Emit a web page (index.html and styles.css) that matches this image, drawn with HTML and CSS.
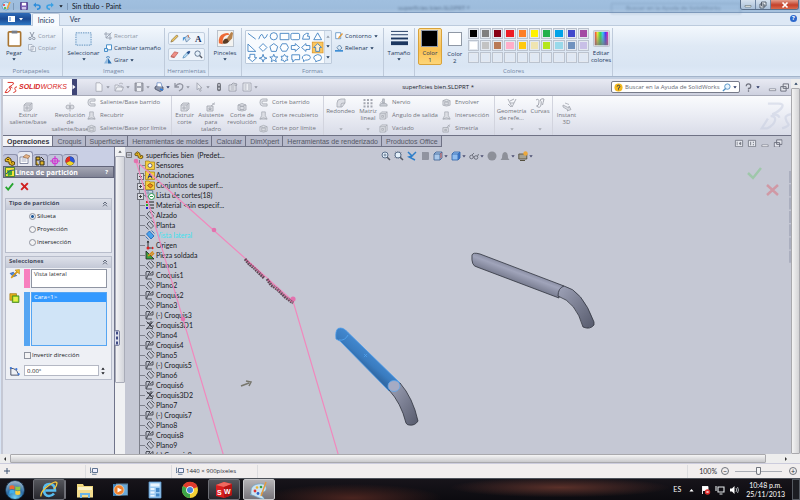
FILE: index.html
```html
<!DOCTYPE html>
<html lang="es">
<head>
<meta charset="utf-8">
<title>Sin título - Paint</title>
<link rel="stylesheet" href="styles.css">
</head>
<body>
<svg class="defs" aria-hidden="true">
  <defs>
    <linearGradient id="g-tube" x1="0" y1="0" x2="1" y2="1"><stop offset="0" stop-color="#9fa3b8"/><stop offset="1" stop-color="#565a6c"/></linearGradient>
    <linearGradient id="g-bar" gradientUnits="userSpaceOnUse" x1="522" y1="268" x2="516" y2="284"><stop offset="0" stop-color="#82869b"/><stop offset=".35" stop-color="#a0a4ba"/><stop offset="1" stop-color="#707487"/></linearGradient>
    <linearGradient id="g-blue" gradientUnits="userSpaceOnUse" x1="372" y1="353" x2="362" y2="365"><stop offset="0" stop-color="#4288cf"/><stop offset=".6" stop-color="#3a7cc0"/><stop offset="1" stop-color="#3069a5"/></linearGradient>
    <linearGradient id="g-rain" x1="0" x2="1" y1="0" y2="0"><stop offset="0" stop-color="#f33"/><stop offset=".2" stop-color="#ee3"/><stop offset=".4" stop-color="#3d4"/><stop offset=".6" stop-color="#3cf"/><stop offset=".8" stop-color="#43f"/><stop offset="1" stop-color="#f2a"/></linearGradient>
    <linearGradient id="g-dark" x1="0" x2="0" y1="0" y2="1"><stop offset="0" stop-color="#888" stop-opacity="0"/><stop offset="1" stop-color="#777" stop-opacity=".8"/></linearGradient>
    <radialGradient id="g-orb" cx=".5" cy=".9" r=".9"><stop offset="0" stop-color="#6fd0f5"/><stop offset=".5" stop-color="#2a6da8"/><stop offset="1" stop-color="#a9bccb"/></radialGradient>
  </defs>
  <symbol id="i-caret" viewBox="0 0 4 3"><path d="M.3.3h3.4L2 2.4z" fill="currentColor"/></symbol>
  <symbol id="i-plane" viewBox="0 0 10 10"><g fill="none" stroke="#3c3f48" stroke-width=".8"><path d="M2 4 4.500 1.500 8.500 6 6 8.500zM.5 6.500l3 3M6.500.500l3 3"/></g></symbol>
  <symbol id="i-planeb" viewBox="0 0 10 10"><path d="M1.500 4 4.500 1l4.500 5L6 9z" fill="#49a3ee" stroke="#1c5fae" stroke-width=".8"/><path d="M.5 6.500l3 3M6.500.500l3 3" stroke="#1c5fae" stroke-width=".8"/></symbol>
  <symbol id="i-sk" viewBox="0 0 10 10"><path d="M1 1.500h4L3 5h5V1.500L5 4M1 2v7h6M3 5 1.500 8.500" fill="none" stroke="#3c3f48" stroke-width=".9"/></symbol>
  <symbol id="i-sk3" viewBox="0 0 10 10"><path d="M1.500 1.500 8 8M8 1.500 2 8.500M2 3h3v3h4M1 9l3-1 4 1M6 1v3" fill="none" stroke="#33363e" stroke-width=".9"/></symbol>
  <symbol id="i-folder" viewBox="0 0 10 10"><path d="M.5 1h3.500l1 1h4.500v7.500h-9z" fill="#f5cf3f" stroke="#a87c10" stroke-width=".7"/></symbol>
  <symbol id="i-part" viewBox="0 0 12 10"><path d="M1 3.500 4 1l3 2v2l3.500 1v2.500L8 9.500 5 8V6L1.500 5.500z" fill="#e9b820" stroke="#4c3a08" stroke-width=".9"/><path d="M3 3.500h2M7 6.500l1.500.7" stroke="#4c3a08" stroke-width=".9"/></symbol>
  <symbol id="i-cube" viewBox="0 0 10 10"><path d="M1 3h6v6H1zM1 3l2-2h6v6L7 9M7 3l2-2M3 5h2v2H3z" fill="#dcdee4" stroke="currentColor" stroke-width=".8"/></symbol>
  <symbol id="i-rev" viewBox="0 0 10 10"><path d="M1 5q0-2 2-2t2 2-2 2-2-2zM5 5q0-2 2-2t2 2-2 2-2-2zM5 .5v9" fill="#dcdee4" stroke="currentColor" stroke-width=".8"/></symbol>
  <symbol id="i-sweep" viewBox="0 0 10 10"><path d="M9 1H4Q1 1 1 4.800T4 9h5V6.500H4.500Q3.500 6.500 3.500 5t1-1.500H9z" fill="#dcdee4" stroke="currentColor" stroke-width=".8"/></symbol>
  <symbol id="i-loft" viewBox="0 0 10 10"><path d="M3 1h4v4l2 4H1l2-4zM1 9q4-3 8 0" fill="#dcdee4" stroke="currentColor" stroke-width=".8"/></symbol>
  <symbol id="i-bound" viewBox="0 0 10 10"><path d="M1 3q4-3 8 0v5q-4 2-8 0zM3 4.500h4v3H3zM1 3q4 2 8 0" fill="#dcdee4" stroke="currentColor" stroke-width=".8"/></symbol>
  <symbol id="i-wiz" viewBox="0 0 10 10"><path d="M1 4h6v5H1zM3 6h2v1.500H3zM5 4 9 .7M6.500 1l2 2" fill="#dcdee4" stroke="currentColor" stroke-width=".9"/></symbol>
  <symbol id="i-fil" viewBox="0 0 10 10"><path d="M1 9V5q0-4 4-4h4v4L6 9zM5 9V6q0-1 4-1" fill="#dcdee4" stroke="currentColor" stroke-width=".8"/></symbol>
  <symbol id="i-mat" viewBox="0 0 10 10"><path d="M.5 1h2v2h-2zM4 1h2v2H4zM7.500 1h2v2h-2zM.5 4.200h2v2h-2zM4 4.200h2v2H4zM7.500 4.200h2v2h-2zM.5 7.500h2v2h-2zM4 7.500h2v2H4zM7.500 7.500h2v2h-2z" fill="currentColor"/></symbol>
  <symbol id="i-rib" viewBox="0 0 10 10"><path d="M1 7 5 5l4 2v2H1zM4 1h2v5H4zM5 2 1 6" fill="#c9ccd4" stroke="currentColor" stroke-width=".8"/></symbol>
  <symbol id="i-geo" viewBox="0 0 10 10"><path d="M1 1l4 8 4-8M3 5h4M7 1 3 3M1 6l3 3" fill="none" stroke="currentColor" stroke-width=".9"/></symbol>
  <symbol id="i-curve" viewBox="0 0 10 10"><path d="M1 2q3-2 3 2T1.500 8Q5 11 6 7T5 2q2-2 4-1-1 4-1.500 6" fill="none" stroke="currentColor" stroke-width="1"/></symbol>
  <symbol id="i-inst" viewBox="0 0 10 10"><path d="M1 3l6 3V4l2 3.500L5 9l1-1-5-3zM3 1l4 1.500" fill="#dcdee4" stroke="currentColor" stroke-width=".8"/></symbol>
  <symbol id="i-mag" viewBox="0 0 10 10"><circle cx="4" cy="4" r="3" fill="#e4f0fa" stroke="#5a6f8b" stroke-width="1"/><path d="M6.200 6.200 9 9" stroke="#555a66" stroke-width="1.500"/></symbol>
  <symbol id="i-restore" viewBox="0 0 10 10"><path d="M3.500 1h6v5h-6zM.8 4h6v5h-6z" fill="#e3e5ec" stroke="#666a78" stroke-width="1"/></symbol>
  <symbol id="i-min" viewBox="0 0 10 10"><path d="M1.500 6.500h7v2h-7z" fill="#fff" stroke="#777b88" stroke-width=".8"/></symbol>
  <symbol id="i-size" viewBox="0 0 8 8"><path d="M2.500 1.500h5v4h-5z" fill="#eef" stroke="#4e6484" stroke-width=".9"/><path d="M.5.5v4M0 4.500 .5 6l.8-1.500M2 7.300h4.500" fill="none" stroke="#4e6484" stroke-width=".8"/></symbol>
  <symbol id="i-check" viewBox="0 0 10 10"><path d="M.8 5.500 3.500 8.500 9 1.500" fill="none" stroke="currentColor" stroke-width="2"/></symbol>
  <symbol id="i-cross" viewBox="0 0 10 10"><path d="M1.300 1.300 8.700 8.700M8.700 1.300 1.300 8.700" stroke="currentColor" stroke-width="2.200"/></symbol>
  <symbol id="i-chev" viewBox="0 0 6 6"><path d="M1 3l2-2 2 2M1 5.300l2-2 2 2" fill="none" stroke="#444c60" stroke-width=".8"/></symbol>
  <symbol id="i-ds" viewBox="0 0 36 34"><path d="M10 3h12q6 0 4 4t-11 8q7 0 8 4M13 17q6 0 5 5t-9 9H3l7-11" fill="none" stroke="currentColor" stroke-width="2.600"/><path d="M36 15q-7 1-6 5t3 6-7 5" fill="none" stroke="currentColor" stroke-width="2.600"/></symbol>
</svg>

<header class="titlebar">
  <svg class="ic10" viewBox="0 0 10 10"><path d="M1 5Q1 1 5 1l3 1-1 3 1 3-3 1Q1 9 1 5z" fill="#cfe6f5" stroke="#4d92c4" stroke-width=".7"/><circle cx="3" cy="4" r="1" fill="#e33"/><circle cx="4" cy="7" r="1" fill="#3a3"/><path d="M6 8 9 1" stroke="#f2a23a" stroke-width="1.600"/></svg>
  <i class="tick"></i>
  <button aria-label="Guardar"><svg class="ic8" viewBox="0 0 8 8"><path d="M.5.5h7v7h-7z" fill="#7c61b5" stroke="#4c3a85" stroke-width=".8"/><path d="M2 .8h4v2.700H2z" fill="#fff"/><path d="M2 5h4v2.500H2z" fill="#cfc6ea"/></svg></button>
  <button aria-label="Deshacer"><svg class="ic8" viewBox="0 0 8 8"><path d="M1 3h3.500q2.500 0 2.500 2T4 7.300" fill="none" stroke="#2f8ddb" stroke-width="1.600"/><path d="M.2 3 3 .4v5z" fill="#2f8ddb"/></svg></button>
  <button aria-label="Rehacer"><svg class="ic8" viewBox="0 0 8 8"><path d="M7 3H3.500Q1 3 1 5t3 2.300" fill="none" stroke="#3aa0e3" stroke-width="1.600"/><path d="M7.800 3 5 .4v5z" fill="#3aa0e3"/></svg></button>
  <svg class="car" viewBox="0 0 4 3"><use href="#i-caret"/></svg>
  <i class="tick"></i>
  <h1>Sin título - Paint</h1>
  <span class="ghost" aria-hidden="true">superficies bien.SLDPRT *</span>
  <span class="ghost ghost-search" aria-hidden="true">Buscar en la Ayuda de SolidWorks</span>
  <div class="winbtns">
    <button aria-label="Minimizar"><svg viewBox="0 0 8 8"><path d="M1 4.500h6v1.500H1z" fill="#fff" stroke="#455" stroke-width=".5"/></svg></button>
    <button aria-label="Restaurar"><svg viewBox="0 0 8 8"><path d="M2.500 1h4.500v4H2.500zM1 3h4v4H1z" fill="#e8eef5" stroke="#3d4654" stroke-width=".8"/></svg></button>
    <button class="close" aria-label="Cerrar"><svg viewBox="0 0 8 8"><path d="M1.500 1.500 6.500 6.500M6.500 1.500 1.500 6.500" stroke="#fff" stroke-width="1.700"/></svg></button>
  </div>
</header>

<nav class="tabs">
  <button class="file" aria-label="Menú Paint"><svg viewBox="0 0 18 8"><path d="M1 1h7v6H1z" fill="#fff"/><path d="M2 2h2v4H2z" fill="#9bb8e0"/><path d="M12 3h4l-2 2.500z" fill="#fff"/></svg></button>
  <button class="tab on">Inicio</button>
  <button class="tab">Ver</button>
  <button class="help" aria-label="Ayuda">?</button>
</nav>

<section class="ribbon">
  <div class="group g-clip">
    <div class="items">
      <button class="big"><svg viewBox="0 0 16 18"><rect x="1.500" y="2" width="13" height="15" rx="1" fill="#fff" stroke="#a9742f" stroke-width="1.700"/><path d="M5 .7h6v3H5z" fill="#777e8a"/></svg>Pegar<svg class="car"><use href="#i-caret"/></svg></button>
      <div class="col off">
        <button><svg viewBox="0 0 8 8"><path d="M2 0l2.500 5M6 0 3.500 5" stroke="#8d96a6" stroke-width="1"/><circle cx="2" cy="6.500" r="1.200" fill="none" stroke="#8d96a6"/><circle cx="5.800" cy="6.500" r="1.200" fill="none" stroke="#8d96a6"/></svg>Cortar</button>
        <button><svg viewBox="0 0 8 8"><path d="M.5.500h3.500l1 1V6H.5zM3 2.500h3.500l1 1v4H3z" fill="#eef2f8" stroke="#9aa5b6" stroke-width=".7"/></svg>Copiar</button>
      </div>
    </div>
    <h2>Portapapeles</h2>
  </div>
  <div class="group g-img">
    <div class="items">
      <button class="big"><svg viewBox="0 0 18 18"><rect x="1" y="3" width="16" height="13" fill="#d9e8f7" stroke="#4c83b5" stroke-width=".9" stroke-dasharray="1.500 1"/></svg>Seleccionar<svg class="car"><use href="#i-caret"/></svg></button>
      <div class="col">
        <button class="dim"><svg viewBox="0 0 8 8"><path d="M2 0v6h6M0 2h6v6M2 6 7.500.500" fill="none" stroke="#97a0b0" stroke-width=".9"/></svg>Recortar</button>
        <button><svg viewBox="0 0 8 8"><path d="M2.500.8h5v5h-5z" fill="#fff" stroke="#3b86c4" stroke-width=".9"/><path d="M.5 4.500h3v3h-3z" fill="#d9ebf8" stroke="#3b86c4" stroke-width=".9"/></svg>Cambiar tamaño</button>
        <button><svg viewBox="0 0 8 8"><path d="M0 7.500 3 2.500v5z" fill="#8db8de"/><path d="M3.700 7.500V1.500l4 6z" fill="#2a6fb0"/><path d="M2 1.500q2-2 4 0" fill="none" stroke="#2a6fb0" stroke-width=".8"/></svg>Girar<svg class="car"><use href="#i-caret"/></svg></button>
      </div>
    </div>
    <h2>Imagen</h2>
  </div>
  <div class="group g-tools">
    <div class="items tools">
      <div class="toolrow">
        <button aria-label="Lápiz"><svg viewBox="0 0 10 10"><path d="M1 9l1-2.500L7.500 1 9 2.500 3.500 8z" fill="#f0c860" stroke="#776033" stroke-width=".7"/></svg></button>
        <button aria-label="Relleno"><svg viewBox="0 0 10 10"><path d="M3 4.500 6 1.500l3 3.500-4 4z" fill="#c9dcee" stroke="#51779f" stroke-width=".8"/><path d="M1 8V4l3-1z" fill="#3f8fd5"/><path d="M7 1v3" stroke="#d66a3c"/></svg></button>
        <button class="glyph">A</button>
      </div>
      <div class="toolrow">
        <button aria-label="Borrador"><svg viewBox="0 0 10 10"><path d="M1 7l4-5 4 1-4 5z" fill="#ef8f86" stroke="#b5554d" stroke-width=".7"/><path d="M1 7l4 1v1L1 8z" fill="#b5554d"/></svg></button>
        <button aria-label="Selector de color"><svg viewBox="0 0 10 10"><path d="M1 9l1-2.500 3.500-3.500L7 4.500 3.500 8z" fill="#bfe0f7" stroke="#3b7dad" stroke-width=".7"/><path d="M5 2.500 7.500 5 9.300 2 8 .7z" fill="#27508c"/></svg></button>
        <button aria-label="Lupa"><svg viewBox="0 0 10 10"><use href="#i-mag"/></svg></button>
      </div>
    </div>
    <h2>Herramientas</h2>
  </div>
  <div class="group g-brush">
    <div class="items">
      <button class="big"><svg viewBox="0 0 18 18"><rect x=".5" y=".5" width="17" height="17" fill="#f3f3f1" stroke="#b9c0ca"/><path d="M2 14Q1 6 7 4t6 1Q5 5 6 15z" fill="#ee6a35"/><path d="M6 14q0-5 5-5l2 3q-3 4-7 2z" fill="#5a3a22"/><path d="M10.500 9 15 2l2 1-1 6-3 3z" fill="#b7824b"/></svg>Pinceles<svg class="car"><use href="#i-caret"/></svg></button>
    </div>
  </div>
  <div class="group g-shapes">
    <div class="items">
      <div class="gallery">
        <svg class="shapes" viewBox="0 0 80 32" role="img" aria-label="Formas">
          <rect x="68" y="11" width="11" height="11" fill="#fbc65d" stroke="#d9952a" stroke-width=".8"/>
          <g fill="#fff" fill-opacity=".7" stroke="#3d7fc0" stroke-width=".9">
            <path d="M2 2l8 6"/><path d="M13 8q3-8 4.500-3t4.500-2" fill="none"/><circle cx="28.500" cy="5" r="3.700"/><path d="M35 2h9v6.500h-9z"/><rect x="46" y="2" width="9" height="6.500" rx="1.500"/><path d="M58 8l1-4 3-2h2l-1 3h2v3z"/><path d="M69.500 8.500 73.500 1.500l4 7z"/>
            <path d="M2 13v7.500h8z"/><path d="M17.500 12.500l4 4-4 4-4-4z"/><path d="M28.500 12.500l4 3-1.500 5h-5l-1.500-5z"/><path d="M37 12.700h4.500l2 3.800-2 3.800H37l-2-3.800z"/><path d="M46.500 14.500h4v-2l4.500 4-4.500 4v-2h-4z"/><path d="M65.500 14.500h-4v-2l-4.500 4 4.500 4v-2h4z"/><path d="M73.500 12.500l4 4h-2v4h-4v-4h-2z"/>
            <path d="M4 23.500h5V27h2l-4.500 4L2 27h2z"/><path d="M17.500 23.500l1 3 3 1-3 1-1 3-1-3-3-1 3-1z"/><path d="M28.500 23.500l1.100 2.700h3l-2.300 2 .8 3-2.600-1.700-2.600 1.700.8-3-2.300-2h3z"/><path d="M39.500 23.500l1.200 2h2.300l-1 2 1 2h-2.300l-1.200 2-1.200-2H36l1-2-1-2h2.300z"/><path d="M47 24h8v5h-5l-2 2.500V29h-1z"/><path d="M62 24q4 0 4 2.700T61 29.500l-2 1.500v-2q-2-1-1-3t4-2z"/><path d="M73.500 23.800q4 0 4 3.200t-4 3.200l-2 1v-1.500q-2-1-2-3t4-2.900z"/>
          </g>
        </svg>
        <div class="gscroll"><svg class="car up dim"><use href="#i-caret"/></svg><svg class="car"><use href="#i-caret"/></svg><svg class="car"><use href="#i-caret"/></svg></div>
      </div>
      <div class="col">
        <button><svg viewBox="0 0 8 8"><path d="M.7.7h5v6h-5z" fill="#fff" stroke="#5a8fc2" stroke-width=".8"/><path d="M3 7l.5-2L7 1l1 1-3.500 4z" fill="#e39a3c"/></svg>Contorno<svg class="car"><use href="#i-caret"/></svg></button>
        <button><svg viewBox="0 0 8 8"><path d="M2 3.500 4.500 1 7 4 4 6.500z" fill="#dbe9f5" stroke="#51779f" stroke-width=".8"/><path d="M0 7.700V6h8v1.700z" fill="#3f8fd5"/></svg>Rellenar<svg class="car"><use href="#i-caret"/></svg></button>
      </div>
    </div>
    <h2>Formas</h2>
  </div>
  <div class="group g-size">
    <div class="items">
      <button class="big"><svg viewBox="0 0 18 18"><path d="M0 1.500h18M0 5h18" stroke="#1d3760" stroke-width="1"/><path d="M0 9h18" stroke="#1d3760" stroke-width="2"/><path d="M0 14h18" stroke="#1d3760" stroke-width="4"/></svg>Tamaño<svg class="car"><use href="#i-caret"/></svg></button>
    </div>
  </div>
  <div class="group g-colors">
    <div class="items">
      <button class="big pick on"><span class="chip black"></span>Color<br>1</button>
      <button class="big pick"><span class="chip white"></span>Color<br>2</button>
      <div class="palette">
        <i class="c1"></i><i class="c2"></i><i class="c3"></i><i class="c4"></i><i class="c5"></i><i class="c6"></i><i class="c7"></i><i class="c8"></i><i class="c9"></i><i class="c10"></i>
        <i class="d1"></i><i class="d2"></i><i class="d3"></i><i class="d4"></i><i class="d5"></i><i class="d6"></i><i class="d7"></i><i class="d8"></i><i class="d9"></i><i class="d10"></i>
        <i></i><i></i><i></i><i></i><i></i><i></i><i></i><i></i><i></i><i></i>
      </div>
      <button class="big edit"><svg viewBox="0 0 18 18"><rect x=".5" y=".5" width="17" height="17" rx="1" fill="#d6dbe3" stroke="#bcc3cf"/><path d="M2 2h14v14H2z" fill="url(#g-rain)"/><path d="M2 2h14v14H2z" fill="url(#g-dark)"/></svg>Editar<br>colores</button>
    </div>
    <h2>Colores</h2>
  </div>
</section>

<main class="work">
  <div class="sheet">
    <div class="sw-title">
      <div class="logo"><svg viewBox="0 0 36 34"><use href="#i-ds"/></svg><b>SOLID</b><span>WORKS</span></div>
      <button class="flyout" aria-label="Menú"><svg viewBox="0 0 4 6"><path d="M.5.5 3.500 3 .5 5.500z" fill="#fff"/></svg></button>
      <div class="sw-tools">
        <svg viewBox="0 0 10 10"><path d="M2 .8h4l2 2v6.500H2z" fill="#f4f5f8" stroke="#a4a7b2" stroke-width=".8"/></svg><svg class="car"><use href="#i-caret"/></svg>
        <svg viewBox="0 0 10 10"><path d="M1 9V3h3l1 1h3v2M1 9l2-4h6.500L8 9zM5 2q2-2 4 0" fill="#eceef3" stroke="#a4a7b2" stroke-width=".8"/></svg><svg class="car"><use href="#i-caret"/></svg>
        <svg viewBox="0 0 10 10"><path d="M1 1h8v8H1z" fill="#a9acb7" stroke="#83868f" stroke-width=".8"/><path d="M3 1h4v3H3zM3 6h4v3H3z" fill="#eceef3"/></svg><svg class="car"><use href="#i-caret"/></svg>
        <svg viewBox="0 0 10 10"><path d="M1 5l3-2 5 2v3L6 9.500 1 7z" fill="#8b93a8" stroke="#3c4358" stroke-width=".7"/><path d="M3 4V.8h4l1 4" fill="#fff" stroke="#5a7fbf" stroke-width=".7"/><path d="M6 7l3 1" stroke="#2c7de0" stroke-width="1.500"/></svg><svg class="car dark"><use href="#i-caret"/></svg>
        <svg viewBox="0 0 10 10"><path d="M1 1v4h4M1.500 4.500Q4 1 7 2t1 5l-3 2" fill="none" stroke="#9295a1" stroke-width="1.300"/></svg><svg class="car"><use href="#i-caret"/></svg>
        <svg viewBox="0 0 10 10"><path d="M3 .8v7l1.700-1.500 1.300 3 1.200-.6-1.300-2.700H8z" fill="#e8eaf0" stroke="#9c9fab" stroke-width=".8"/></svg><svg class="car"><use href="#i-caret"/></svg>
        <svg viewBox="0 0 10 10"><rect x="3" y=".8" width="4" height="8.500" rx="2" fill="#73767f"/><circle cx="5" cy="3" r="1" fill="#c8cad2"/><circle cx="5" cy="6.500" r="1" fill="#c8cad2"/></svg>
        <svg viewBox="0 0 10 10"><path d="M1 3h7v6H1zM3 3l2-2 4 1-1 2M2.500 5h4M2.500 7h4" fill="#eceef3" stroke="#9295a1" stroke-width=".8"/></svg>
        <svg viewBox="0 0 10 10"><path d="M1 1h8v8H1zM2.500 3h2M2.500 5h2M2.500 7h2M6 3h2M6 5h2M6 7h2" fill="#eceef3" stroke="#9c9fab" stroke-width=".8"/></svg><svg class="car"><use href="#i-caret"/></svg>
      </div>
      <span class="doc">superficies bien.SLDPRT *</span>
      <label class="search"><svg viewBox="0 0 10 10"><circle cx="5" cy="5" r="4.500" fill="#f3b81c"/><path d="M3.500 4q0-1.500 1.500-1.500T6.500 4 5 5.500v1M5 7v1" stroke="#39404f" stroke-width="1.100" fill="none"/></svg><input type="text" placeholder="Buscar en la Ayuda de SolidWorks" aria-label="Buscar en la Ayuda"><svg viewBox="0 0 10 10"><circle cx="6" cy="4" r="3" fill="#eaf5fd" stroke="#4f8fc4"/><path d="M4 6.200 1 9" stroke="#4f8fc4" stroke-width="1.500"/></svg><svg class="car dark"><use href="#i-caret"/></svg></label>
      <div class="sw-win">
        <svg viewBox="0 0 10 10"><path d="M2.500 3.500Q2.500 1 5 1t2.500 2.500T5 6v1.200M5 8v1.600" fill="none" stroke="#70737f" stroke-width="1.400"/></svg><svg class="car dark"><use href="#i-caret"/></svg>
        <svg viewBox="0 0 10 10"><use href="#i-min"/></svg><svg viewBox="0 0 10 10"><use href="#i-restore"/></svg>
      </div>
    </div>

    <div class="cmd">
      <button class="w50"><svg><use href="#i-cube"/></svg><span>Extruir<br>saliente/base</span></button>
      <button class="w34"><svg><use href="#i-rev"/></svg><span>Revolución<br>de<br>saliente/base</span></button>
      <div class="stack w84"><button><svg><use href="#i-sweep"/></svg>Saliente/Base barrido</button><button><svg><use href="#i-loft"/></svg>Recubrir</button><button><svg><use href="#i-bound"/></svg>Saliente/Base por límite</button></div>
      <button class="w26 sep"><svg><use href="#i-cube"/></svg><span>Extruir<br>corte</span></button>
      <button class="w28"><svg><use href="#i-wiz"/></svg><span>Asistente<br>para<br>taladro</span></button>
      <button class="w34"><svg><use href="#i-bound"/></svg><span>Corte de<br>revolución</span></button>
      <div class="stack w64"><button><svg><use href="#i-sweep"/></svg>Corte barrido</button><button><svg><use href="#i-loft"/></svg>Corte recubierto</button><button><svg><use href="#i-bound"/></svg>Corte por límite</button></div>
      <button class="w34 sep drop near"><svg><use href="#i-fil"/></svg><span>Redondeo</span><svg class="car"><use href="#i-caret"/></svg></button>
      <button class="w22 drop near"><svg><use href="#i-mat"/></svg><span>Matriz<br>lineal</span><svg class="car"><use href="#i-caret"/></svg></button>
      <div class="stack w63"><button><svg><use href="#i-rib"/></svg>Nervio</button><button><svg><use href="#i-cube"/></svg>Ángulo de salida</button><button><svg><use href="#i-cube"/></svg>Vaciado</button></div>
      <div class="stack w52"><button><svg><use href="#i-bound"/></svg>Envolver</button><button><svg><use href="#i-loft"/></svg>Intersección</button><button><svg><use href="#i-wiz"/></svg>Simetría</button></div>
      <button class="w34 sep drop near"><svg><use href="#i-geo"/></svg><span>Geometría<br>de refe...</span><svg class="car"><use href="#i-caret"/></svg></button>
      <button class="w24 drop near"><svg><use href="#i-curve"/></svg><span>Curvas</span><svg class="car"><use href="#i-caret"/></svg></button>
      <button class="w28 sep"><svg><use href="#i-inst"/></svg><span>Instant<br>3D</span></button>
      <svg class="mark" viewBox="0 0 36 34"><use href="#i-ds"/></svg>
    </div>

    <div class="cmd-tabs">
      <button class="on">Operaciones</button><button>Croquis</button><button>Superficies</button><button>Herramientas de moldes</button><button>Calcular</button><button>DimXpert</button><button>Herramientas de renderizado</button><button>Productos Office</button>
      <div class="view-win">
        <svg viewBox="0 0 10 10"><path d="M1 1.500h8v7H1z" fill="#e6e8ee" stroke="#70747f" stroke-width=".9"/><path d="M3 3v4M5 5l2-1.500v3z" fill="#70747f" stroke="#70747f" stroke-width=".8"/></svg>
        <svg viewBox="0 0 10 10"><path d="M1 1.500h8v7H1z" fill="#e6e8ee" stroke="#70747f" stroke-width=".9"/><path d="M3.500 3v4M6.500 3v1.500M6.500 5.500V7" stroke="#70747f" stroke-width="1"/></svg>
        <svg viewBox="0 0 10 10"><use href="#i-min"/></svg><svg viewBox="0 0 10 10"><use href="#i-restore"/></svg>
      </div>
    </div>

    <div class="model">
      <aside class="panel">
        <div class="ptabs">
          <button aria-label="Árbol"><svg viewBox="0 0 12 10"><use href="#i-part"/></svg></button>
          <button class="on" aria-label="Propiedades"><svg viewBox="0 0 12 10"><path d="M1 3h8v6.500H1z" fill="#fff" stroke="#6e7692" stroke-width=".8"/><path d="M2.500 5h5M2.500 7h5" stroke="#8f97b3" stroke-width=".8"/><path d="M4 3l3-2.500 4 1.500-2 2.500z" fill="#e7b486" stroke="#8d5f3c" stroke-width=".6"/></svg></button>
          <button aria-label="Configuraciones"><svg viewBox="0 0 12 10"><path d="M2 1h4v3H2zM2 4v5h3M6 5h4v4H6zM7 1l3 3" fill="#e2b52a" stroke="#2f2a18" stroke-width="1"/></svg></button>
          <button aria-label="DimXpert"><svg viewBox="0 0 12 10"><circle cx="6" cy="5" r="2.800" fill="none" stroke="#d136d1" stroke-width="1.100"/><path d="M6 0v10M1 5h10" stroke="#d136d1" stroke-width="1.100"/></svg></button>
          <button aria-label="Apariencias"><svg viewBox="0 0 12 10"><circle cx="6" cy="5" r="4.500" fill="#222"/><path d="M6 5V.500A4.500 4.500 0 0 0 2 7z" fill="#e12d25"/><path d="M6 5V.500A4.500 4.500 0 0 1 10 7z" fill="#2b53d8"/><path d="M6 5 2 7a4.500 4.500 0 0 0 8 0z" fill="#f2d52a"/></svg></button>
        </div>
        <div class="phead"><svg viewBox="0 0 10 10"><path d="M.5.500h9v9h-9z" fill="#f4e23b" stroke="#2d7a27" stroke-width=".8"/><path d="M2 3l5 1v4l-4 1z" fill="#3fa535"/><path d="M1 7q4-5 8-4" fill="none" stroke="#204f8c"/></svg><h3>Línea de partición</h3><b>?</b></div>
        <div class="pok"><button class="ok" aria-label="Aceptar"><svg><use href="#i-check"/></svg></button><button class="no" aria-label="Cancelar"><svg><use href="#i-cross"/></svg></button></div>
        <fieldset class="box">
          <legend>Tipo de partición</legend><svg class="chev"><use href="#i-chev"/></svg>
          <div class="radios">
            <label><input type="radio" name="tipo" checked>Silueta</label>
            <label><input type="radio" name="tipo">Proyección</label>
            <label><input type="radio" name="tipo">Intersección</label>
          </div>
        </fieldset>
        <fieldset class="box">
          <legend>Selecciones</legend><svg class="chev"><use href="#i-chev"/></svg>
          <div class="sel">
            <svg viewBox="0 0 10 10"><path d="M1 4l3 3 3-1-3-3z" fill="#4b8be0" stroke="#2a4f9c" stroke-width=".6"/><path d="M2 8 8 2" stroke="#d99a16" stroke-width="1.500"/><path d="M9.500.500v4l-4-3.500z" fill="#f2c02e" stroke="#a87b12" stroke-width=".5"/></svg>
            <i class="pink"></i>
            <select size="2" aria-label="Plano"><option>Vista lateral</option></select>
          </div>
          <div class="sel tall">
            <svg viewBox="0 0 10 10"><path d="M.8 1.500h6v6h-6z" fill="#e8b21b" stroke="#9c7410" stroke-width=".6"/><path d="M3 3.500h6v6H3z" fill="#8fd52c" stroke="#3f7d12" stroke-width=".7"/><path d="M4 4.500h4v4H4z" fill="#e7ef49"/></svg>
            <i class="blue"></i>
            <select size="2" class="active" aria-label="Caras"><option selected>Cara&lt;1&gt;</option></select>
          </div>
          <label class="inv"><input type="checkbox">Invertir dirección</label>
          <div class="ang">
            <svg viewBox="0 0 12 10"><path d="M2 1.500v8h9M2 2q6 0 8 6" fill="none" stroke="#2f3850" stroke-width=".9"/><circle cx="2" cy="1.800" r="1.200" fill="#3d78d8"/><circle cx="8" cy="3" r="1.200" fill="#3d78d8"/><circle cx="10.500" cy="8.500" r="1.200" fill="#3d78d8"/></svg>
            <input type="text" value="0.00°" aria-label="Ángulo">
            <span class="spin"><svg class="car up"><use href="#i-caret"/></svg><svg class="car"><use href="#i-caret"/></svg></span>
          </div>
        </fieldset>
      </aside>
      <div class="pscroll"><span><svg class="car up"><use href="#i-caret"/></svg></span><i></i><b></b></div>

      <div class="view">
        <ul class="tree">
          <li class="root"><svg class="bx" viewBox="0 0 6 6"><path d="M.5.5h5v5h-5zM1.500 3h3" fill="none" stroke="#555" stroke-width=".7"/></svg><svg viewBox="0 0 12 10"><use href="#i-part"/></svg>superficies bien&nbsp; (Predet...</li>
          <li><svg viewBox="0 0 10 10"><use href="#i-folder"/><circle cx="5" cy="5.500" r="2" fill="#fff" stroke="#446" stroke-width=".7"/></svg>Sensores</li>
          <li class="exp"><svg viewBox="0 0 10 10"><use href="#i-folder"/><path d="M3 8.500 5 3l2 5.500M3.800 6.500h2.500" fill="none" stroke="#1b2f8c" stroke-width="1"/></svg>Anotaciones</li>
          <li class="exp"><svg viewBox="0 0 10 10"><use href="#i-folder"/><path d="M2.500 5.500 5 3.500l3 2-2.500 2.500z" fill="#f08b1d" stroke="#7d3d06" stroke-width=".7"/></svg>Conjuntos de superf...</li>
          <li class="exp"><svg viewBox="0 0 10 10"><path d="M.7.700h7v6h-7z" fill="#dfeaf4" stroke="#46627f" stroke-width=".8"/><path d="M1 3h6M3 1v5" stroke="#46627f" stroke-width=".6"/><circle cx="6.500" cy="6.500" r="3" fill="#fff" stroke="#28964b"/><path d="M5 6.500h3" stroke="#28964b"/></svg>Lista de cortes(18)</li>
          <li><svg viewBox="0 0 10 10"><path d="M1 2h2" stroke="#c22" stroke-width="2"/><path d="M1 5h2" stroke="#2a2" stroke-width="2"/><path d="M1 8h2" stroke="#22c" stroke-width="2"/><path d="M4 2h5M4 5h5M4 8h5" stroke="#222" stroke-width="1"/></svg>Material &lt;sin especif...</li>
          <li><svg><use href="#i-plane"/></svg>Alzado</li>
          <li><svg><use href="#i-plane"/></svg>Planta</li>
          <li class="hot"><svg><use href="#i-planeb"/></svg>Vista lateral</li>
          <li><svg viewBox="0 0 10 10"><path d="M3 1v7h5" fill="none" stroke="#222" stroke-width=".9"/><path d="M1.700 2.500 3 .5l1.300 2z" fill="#222"/><circle cx="3" cy="8" r="1.500" fill="#d22"/><path d="M7 6.500 9 8 7 9.500z" fill="#d22"/></svg>Origen</li>
          <li><svg viewBox="0 0 10 10"><path d="M1 1v8h8z" fill="#3ca040" stroke="#222" stroke-width=".8"/><path d="M3 6 8 1.500M6 6l3-3" stroke="#d78a16" stroke-width="1.600"/></svg>Pieza soldada</li>
          <li><svg><use href="#i-plane"/></svg>Plano1</li>
          <li><svg><use href="#i-sk"/></svg>Croquis1</li>
          <li><svg><use href="#i-plane"/></svg>Plano2</li>
          <li><svg><use href="#i-sk"/></svg>Croquis2</li>
          <li><svg><use href="#i-plane"/></svg>Plano3</li>
          <li><svg><use href="#i-sk"/></svg>(-) Croquis3</li>
          <li><svg><use href="#i-sk3"/></svg>Croquis3D1</li>
          <li><svg><use href="#i-plane"/></svg>Plano4</li>
          <li><svg><use href="#i-sk"/></svg>Croquis4</li>
          <li><svg><use href="#i-plane"/></svg>Plano5</li>
          <li><svg><use href="#i-sk"/></svg>(-) Croquis5</li>
          <li><svg><use href="#i-plane"/></svg>Plano6</li>
          <li><svg><use href="#i-sk"/></svg>Croquis6</li>
          <li><svg><use href="#i-sk3"/></svg>Croquis3D2</li>
          <li><svg><use href="#i-plane"/></svg>Plano7</li>
          <li><svg><use href="#i-sk"/></svg>(-) Croquis7</li>
          <li><svg><use href="#i-plane"/></svg>Plano8</li>
          <li><svg><use href="#i-sk"/></svg>Croquis8</li>
          <li><svg><use href="#i-plane"/></svg>Plano9</li>
          <li><svg><use href="#i-sk"/></svg>(-) Croquis9</li>
        </ul>
        <div class="hud">
          <svg viewBox="0 0 10 10"><use href="#i-mag"/><path d="M2.500 4h3M4 2.500v3" stroke="#5a6f8b" stroke-width=".8"/></svg>
          <svg viewBox="0 0 10 10"><path d="M1 1h6v6H1z" fill="none" stroke="#777c8a" stroke-width=".7" stroke-dasharray="1 1"/><use href="#i-mag"/></svg>
          <svg viewBox="0 0 10 10"><path d="M1 1l4 4-3 1 6 3M9 1 4 6" stroke="#2f7fc9" stroke-width="1.500" fill="none"/></svg>
          <svg viewBox="0 0 10 10"><path d="M2 1h6q1 0 1 1v6q0 1-1 1H2z" fill="#9194a0"/></svg>
          <span><svg viewBox="0 0 10 10"><path d="M1 3h6v6H1zM1 3l2-2h6v6L7 9M7 3l2-2" fill="#a9c8ea" stroke="#3b5e8f" stroke-width=".8"/><path d="M7.500 2.500v5l1-1v-5z" fill="#d65a4e"/></svg><svg class="car"><use href="#i-caret"/></svg></span>
          <span><svg viewBox="0 0 10 10"><path d="M1 3h6v6H1zM1 3l2-2h6v6L7 9M7 3l2-2" fill="#8fbdf0" stroke="#2e62a8" stroke-width=".8"/><path d="M7.200 3.200v5.500l1.700-1.900V1.500z" fill="#2f6ac0"/></svg><svg class="car"><use href="#i-caret"/></svg></span>
          <span><svg viewBox="0 0 10 10"><circle cx="2.500" cy="6" r="1.800" fill="none" stroke="#666a76" stroke-width=".9"/><circle cx="7" cy="6.500" r="1.800" fill="none" stroke="#666a76" stroke-width=".9"/><path d="M4 6h1M3 4l2-2M8.500 5.500 9.500 3" stroke="#666a76" stroke-width=".9"/></svg><svg class="car"><use href="#i-caret"/></svg></span>
          <svg viewBox="0 0 10 10"><circle cx="5" cy="5" r="4.500" fill="#8d9099"/></svg>
          <span><svg viewBox="0 0 10 10"><path d="M.5 9l1.500-2q0-6 3-6t3 6L9.500 9z" fill="#8d9099"/></svg><svg class="car"><use href="#i-caret"/></svg></span>
          <span><svg viewBox="0 0 10 10"><path d="M.8 3h8v5h-8z" fill="#a5a293" stroke="#55503f" stroke-width=".9"/><path d="M2 9.500h5" stroke="#55503f"/><circle cx="7.500" cy="2.500" r="2.200" fill="#eca83a"/></svg><svg class="car"><use href="#i-caret"/></svg></span>
        </div>
        <svg class="scene" viewBox="125 147 666 307" preserveAspectRatio="xMinYMin slice" aria-hidden="true">
          <g fill="none" stroke="#f188bd" stroke-width="1.200"><path d="M136 161 293 301 339 457M136 161 224 457"/></g>
          <g fill="#e372ae"><circle cx="136" cy="161" r="2.300"/><circle cx="214" cy="230" r="2.300"/><circle cx="183" cy="319" r="2.300"/><circle cx="293" cy="299" r="2.600"/></g>
          <g fill="none" stroke="#5d4654" stroke-width="3" stroke-dasharray="1.800 .7"><path d="M245 259l4 5 5 4 5 5 5 5M267 279l4 6 6 4 8 8 8 6"/></g>
          <g fill="none" stroke="#c4618f" stroke-width="1.600" stroke-dasharray="1.500 1.300"><path d="M246 260l8 7 10 10M268 280l9 9 15 13"/></g>
          <path d="M241 386l8-3M246 381l5 1-2 4" fill="none" stroke="#77766c" stroke-width="1.500"/>
          <path d="M336 339q-1-8 2-10.500 5-2 10 4L401 384q-4 1-6 3t-6 4L340 341z" fill="url(#g-blue)" stroke="#4a9bea" stroke-width=".8"/>
          <path d="M348 335q-3 6-9 5" fill="none" stroke="#57a7f3" stroke-width=".8"/><path d="M364 354l3 3m0-3-3 3" stroke="#57a7f3" stroke-width=".6"/>
          <path d="M400 383q13 15 18 38-3 5-9 4-2 0-3-2-5-20-17-33z" fill="url(#g-tube)" stroke="#30333e" stroke-width=".8"/>
          <ellipse cx="394" cy="386" rx="6" ry="5.500" fill="#a5abc4" stroke="#5fa4e8" stroke-width=".8"/>
          <path d="M472 255q1-3 8-1l84 32q-6 4-5 12l-82-31q-6-1-5-12z" fill="url(#g-bar)" stroke="#30333e" stroke-width=".8"/>
          <path d="M564 286q18 4 30 36v3q-4 5-11 2-7-25-25-31 0-8 6-10z" fill="url(#g-tube)" stroke="#30333e" stroke-width=".8"/>
          <g fill="none" stroke-width="2.500" opacity=".65"><path d="M748 173l5 5 8-10" stroke="#8cc795"/><path d="M767 185l11 10M778 185l-11 10" stroke="#d6818d"/></g>
          <path d="M790 171v92" stroke="#a3a7b8" stroke-width="1.500" stroke-dasharray="12 1.300"/>
        </svg>
      </div>
    </div>
  </div>
  <div class="vbar"><span><svg class="car up"><use href="#i-caret"/></svg></span><i></i></div>
  <div class="hbar"><span><svg viewBox="0 0 4 6"><path d="M3 1 1 3l2 2z" fill="#333"/></svg></span><i></i><span class="end"><svg viewBox="0 0 4 6"><path d="M1 1l2 2-2 2z" fill="#333"/></svg></span></div>
</main>

<footer class="status">
  <span class="cell"><svg viewBox="0 0 8 8"><path d="M4 1v6M1 4h6" stroke="#3f5372" stroke-width="1"/></svg></span>
  <span class="cell"><svg><use href="#i-size"/></svg></span>
  <span class="cell wide"><svg><use href="#i-size"/></svg>1440 × 900píxeles</span>
  <span class="zoom">100%<button aria-label="Alejar">−</button><input type="range" aria-label="Zoom"><button aria-label="Acercar">+</button></span>
</footer>

<div class="taskbar">
  <button class="orb" aria-label="Inicio"><svg viewBox="0 0 20 20"><circle cx="10" cy="10" r="9.500" fill="url(#g-orb)" stroke="#0e2d49" stroke-width=".8"/><path d="M4.500 6q2.500-1.500 5 0v3.700q-2.500-1.500-5 0z" fill="#ee6a31"/><path d="M10.300 6.200q2.500 1.300 5 0v3.700q-2.500 1.300-5 0z" fill="#8ecb3f"/><path d="M4.500 10.400q2.500-1.500 5 0v3.700q-2.500-1.500-5 0z" fill="#3fb0ec"/><path d="M10.300 10.600q2.500 1.300 5 0v3.700q-2.500 1.300-5 0z" fill="#f9ce3c"/></svg></button>
  <button class="app run double" aria-label="Internet Explorer"><svg viewBox="0 0 18 18"><path d="M14 12.500Q12 15 9 15q-5 0-5-6t5.500-6q5.500 0 5.500 6.500H5.500" fill="none" stroke="#58bdf0" stroke-width="2.600"/><path d="M1 15.500Q0 11 8 5t9-3q0 3-3 6" fill="none" stroke="#f5c63a" stroke-width="1.300"/></svg></button>
  <button class="app" aria-label="Explorador"><svg viewBox="0 0 18 18"><path d="M1 3h6l1 2h9v11H1z" fill="#f0d77c"/><path d="M2 6h14v5H2z" fill="#fbf3c8"/><path d="M1 9h16v7.500H1z" fill="#f3dc8d"/><path d="M5 17v-4h8v4" fill="none" stroke="#69b5e8" stroke-width="2"/></svg></button>
  <button class="app" aria-label="Reproductor"><svg viewBox="0 0 18 18"><path d="M2 3l14 1v10L2 15z" fill="#3f87c2"/><path d="M5 2.500h12v12H5z" fill="#7db9e3" opacity=".7"/><circle cx="8" cy="9" r="5" fill="#f1812b" stroke="#fbd8b5" stroke-width=".7"/><path d="M6.500 6.500v5L11 9z" fill="#fff"/></svg></button>
  <button class="app" aria-label="Calculadora"><svg viewBox="0 0 18 18"><path d="M3 1h12v16H3z" fill="#9ccaf0" stroke="#5a94c9" stroke-width=".8"/><path d="M4.500 2.500h9v3h-9zM4.500 7h4v2h-4zM4.500 10.500h4v2h-4zM4.500 14h4v1.500h-4z" fill="#eaf5fd"/><path d="M10 7h3.500v4H10zM10 12.500h3.500v3H10z" fill="#4387c6"/></svg></button>
  <button class="app" aria-label="Chrome"><svg viewBox="0 0 18 18"><circle cx="9" cy="9" r="8" fill="#f4cf33"/><path d="M9 9 2 5a8 8 0 0 1 14.500 1z" fill="#e03b2e"/><path d="M9 9v8A8 8 0 0 1 2 5z" fill="#3da548"/><circle cx="9" cy="9" r="3.800" fill="#fff"/><circle cx="9" cy="9" r="3" fill="#4285d9"/></svg></button>
  <button class="app run" aria-label="SolidWorks"><svg viewBox="0 0 18 18"><path d="M1 4l8-3 8 2v11l-8 3-8-2z" fill="#d81e1e"/><path d="M1 4l8 2 8-3-8-2z" fill="#ef6a60"/><path d="M9 6v11l8-3V3z" fill="#b31414"/><text x="2" y="14" class="sw">S</text><text x="9" y="13" class="sw">W</text></svg></button>
  <button class="app run light" aria-label="Paint"><svg viewBox="0 0 18 18"><path d="M1 10q0-6 7-7t8 3-3 5 0 5-6 0-6-2z" fill="#cbe3f2" stroke="#6ea4c9" stroke-width=".7"/><circle cx="5" cy="10" r="1.400" fill="#d33"/><circle cx="7" cy="6.500" r="1.300" fill="#f0b42b"/><circle cx="11" cy="6" r="1.300" fill="#3a9b3f"/><circle cx="8" cy="12.500" r="1.400" fill="#2a62c9"/><path d="M11 15 16 1" stroke="#e59a3c" stroke-width="1.500"/></svg></button>
  <div class="tray">
    <span class="lang">ES</span>
    <svg class="car up"><use href="#i-caret"/></svg>
    <svg viewBox="0 0 10 10"><path d="M1.500 1v8M2 1.500h5v4H2z" fill="#fff" stroke="#fff" stroke-width=".9"/><circle cx="6.500" cy="7" r="2.700" fill="#dc2b2b"/><path d="M5.500 6l2 2M7.500 6l-2 2" stroke="#fff" stroke-width=".8"/></svg>
    <svg viewBox="0 0 10 10"><path d="M3 2h6v5H3zM4.500 9h3M1 1v5" fill="none" stroke="#e6e9ec" stroke-width="1.100"/></svg>
    <svg viewBox="0 0 10 10"><path d="M1 3.500h2L5.500 1v8L3 6.500H1z" fill="#fff"/><path d="M7 3q1.500 2 0 4M8.500 2q2 3 0 6" fill="none" stroke="#cfd4d8" stroke-width=".8"/></svg>
    <time>10:48 p.m.<br>25/11/2013</time>
    <button class="desk" aria-label="Mostrar escritorio"></button>
  </div>
</div>
</body>
</html>
```
FILE: styles.css
```css
* { box-sizing: border-box; }
html, body { height: 100%; }
body {
  margin: 0;
  display: flex;
  flex-direction: column;
  overflow: hidden;
  font: 6px/7px "Open Sans", "Liberation Sans", sans-serif;
  color: #1e395b;
  background: #c8d4e6;
}
button, input, select { font: inherit; color: inherit; }
button { display: block; border: 0; padding: 0; margin: 0; background: none; white-space: nowrap; }
h1, h2, h3 { margin: 0; font: inherit; }
svg { display: block; flex: none; }
i { font-style: normal; }
.defs { position: absolute; width: 0; height: 0; }
.ic10 { width: 10px; height: 10px; }
.ic8 { width: 8px; height: 8px; }
.car { width: 4px; height: 3px; }
.up { transform: rotate(180deg); }

/* title bar */
.titlebar {
  position: relative;
  display: flex;
  align-items: center;
  height: 13px;
  padding-left: 1px;
  color: #10151c;
  background: linear-gradient(#a0bfdf, #9dbcdc 70%, #a9c3de);
  border-bottom: 1px solid #7f9bbd;
}
.titlebar > button { margin-right: 5px; }
.titlebar h1 { font: 7px/9px Lato, sans-serif; }
.tick { width: 1px; height: 7px; margin: 0 6px 0 2px; background: #7c98b8; }
.titlebar .car + .tick { margin: 0 4px; }
.ghost { position: absolute; left: 398px; top: 5px; color: #2a3f5a; opacity: .6; filter: blur(1px); }
.ghost-search { left: 611px; top: 3px; width: 130px; padding: 1px 14px; border: 1px solid #6f8cae; opacity: .4; }
.winbtns { display: flex; position: absolute; right: 1px; top: 0; border: 1px solid #5a6f8a; border-top: 0; border-radius: 0 0 3px 3px; overflow: hidden; }
.winbtns button { width: 15px; height: 9px; background: linear-gradient(#d5e1ee, #a9bfd8); border-right: 1px solid #6d84a2; }
.winbtns svg { width: 8px; height: 8px; margin: auto; }
.winbtns .close { width: 27px; border: 0; background: linear-gradient(#e3a08f, #c4412b 55%, #d8694c); }

/* ribbon tabs */
.tabs { display: flex; align-items: flex-end; height: 13px; background: #dde8f5; border-bottom: 1px solid #bccbdd; }
.file { width: 31px; height: 12px; background: linear-gradient(#2e6bb8, #1b4a93 50%, #2d77c4); border-radius: 0 2px 0 0; }
.file svg { width: 18px; height: 8px; margin: auto; }
.tab { width: 28px; height: 12px; margin-left: 1px; font: 7px/9px Lato, sans-serif; }
.tab.on { margin-bottom: -1px; height: 13px; background: #f7fafe; border: 1px solid #bccbdd; border-bottom: 0; border-radius: 2px 2px 0 0; }
.help { margin: 0 3px 3px auto; width: 7px; height: 7px; border-radius: 50%; background: #2d68cc; color: #fff; font-weight: bold; }

/* ribbon */
.ribbon { display: flex; height: 51px; padding: 1px 0 0; background: linear-gradient(#f3f8fd, #dfe9f5 40%, #d9e5f3 80%, #e1ecf8); border-bottom: 1px solid #a4b5cb; }
.group { display: flex; flex-direction: column; justify-content: space-between; margin-top: 1px; border-right: 1px solid #bfcbdb; }
.group h2 { text-align: center; color: #7386a3; line-height: 9px; }
.items { display: flex; }
.big { text-align: center; padding-top: 2px; align-self: flex-start; }
.big > svg, .chip { width: 17px; height: 17px; margin: 0 auto 3px; }
.big > .car { width: 4px; height: 3px; margin: 1px auto; }
.col { display: flex; flex-direction: column; padding-top: 2px; }
.col button { display: flex; align-items: center; height: 12px; gap: 2px; }
.col svg { width: 8px; height: 8px; }
.col .car { width: 4px; height: 3px; }
.off, .dim { color: #8f98a8; }
.g-clip { width: 63px; } .g-clip .big { width: 28px; }
.g-img { width: 102px; } .g-img .big { width: 41px; }
.g-tools { width: 44px; }
.g-brush { width: 33px; justify-content: flex-start; } .g-brush .big { width: 32px; }
.g-shapes { width: 142px; }
.g-size { width: 31px; justify-content: flex-start; } .g-size .big { width: 30px; }
.g-colors { width: 198px; }
.tools { flex-direction: column; gap: 3px; padding: 4px 3px 0; }
.toolrow { display: flex; height: 13px; border: 1px solid #c2cfdf; border-radius: 2px; background: #eef4fb; }
.toolrow button { flex: 1; }
.toolrow svg { width: 9px; height: 9px; margin: auto; }
.glyph { font: bold 9px/10px "Liberation Serif", serif; color: #1c3258; }
.gallery { display: flex; margin: 2px 3px 0; height: 34px; border: 1px solid #bccadb; border-radius: 1px; background: #f8fbfe; }
.shapes { width: 78px; height: 32px; }
.gscroll { display: flex; flex-direction: column; justify-content: space-around; align-items: center; width: 7px; border-left: 1px solid #ccd7e5; background: #e4edf7; }
.g-colors .items { padding-left: 3px; }
.pick { width: 24px; height: 37px; border-radius: 2px; padding-top: 1px; }
.pick.on { border: 1px solid #d9a33a; background: linear-gradient(#fbdc9c, #fbc252 60%, #fdd578); padding-top: 0; }
.pick + .palette, .pick + .pick { margin-left: 1px; }
.chip { display: block; border: 1px solid #8f98a5; box-shadow: inset 0 0 0 1px #fff; margin-top: 1px; margin-bottom: 3px; }
.pick:not(.on) .chip { width: 14px; height: 14px; margin: 3px auto 5px; }
.black { background: #000; box-shadow: none; } .white { background: #fff; }
.palette { display: grid; grid-template-columns: repeat(10, 1fr); grid-auto-rows: 11px; gap: 1px; width: 122px; margin-right: 1px; }
.palette i { border: 1px solid #bbc3cf; box-shadow: inset 0 0 0 1px #e4e9f0; background: #dfe8f4; }
.palette .c1 { background: #000; } .palette .c2 { background: #7f7f7f; } .palette .c3 { background: #880015; } .palette .c4 { background: #ed1c24; } .palette .c5 { background: #ff7f27; }
.palette .c6 { background: #fff200; } .palette .c7 { background: #22b14c; } .palette .c8 { background: #00a2e8; } .palette .c9 { background: #3f48cc; } .palette .c10 { background: #a349a4; }
.palette .d1 { background: #fff; } .palette .d2 { background: #c3c3c3; } .palette .d3 { background: #b97a57; } .palette .d4 { background: #ffaec9; } .palette .d5 { background: #ffc90e; }
.palette .d6 { background: #efe4b0; } .palette .d7 { background: #b5e61d; } .palette .d8 { background: #99d9ea; } .palette .d9 { background: #7092be; } .palette .d10 { background: #c8bfe7; }
.edit { width: 22px; }

/* canvas with scroll bars */
.work { flex: 1; min-height: 0; display: grid; grid-template: minmax(0, 1fr) 10px / minmax(0, 1fr) 9px; padding-top: 2px; background: #c3d0e2; }
.sheet { display: flex; flex-direction: column; min-height: 0; overflow: hidden; padding-left: 3px; background: #c5c8d4; color: #5a5d66; border-left: 1px solid #d8e4f5; }
.vbar, .hbar { display: flex; background: #ededed; }
.vbar { flex-direction: column; }
.vbar span { display: grid; place-items: center; height: 9px; }
.vbar i { flex: 1; background: linear-gradient(90deg, #f4f4f4, #d3d3d5); border: 1px solid #a9a9ad; border-radius: 1px; }
.hbar { grid-column: 1 / 3; border-bottom: 1px solid #ccd; }
.hbar span { display: grid; place-items: center; width: 10px; }
.hbar svg { width: 4px; height: 6px; }
.hbar i { flex: 1; background: linear-gradient(#f5f5f5, #c9c9cc); border: 1px solid #a9a9ad; border-radius: 1px; }
.hbar .end { width: 34px; padding-left: 6px; }

/* SolidWorks title bar */
.sw-title { display: flex; align-items: center; height: 17px; margin-left: -1px; background: linear-gradient(#e8eaf3, #ced1df); border-bottom: 1px solid #a6a9b7; }
.logo { display: flex; align-items: center; width: 69px; height: 16px; padding-left: 1px; background: #fff; color: #d7261e; font: italic 7px/8px "Liberation Sans", sans-serif; }
.logo svg { width: 13px; height: 13px; margin-right: 2px; }
.flyout { width: 5px; height: 16px; background: #3f4576; }
.flyout svg { width: 4px; height: 6px; }
.sw-tools { display: flex; align-items: center; gap: 2px; margin-left: 15px; color: #9295a1; }
.sw-tools svg { width: 10px; height: 10px; margin-left: 2px; }
.sw-tools .car { width: 4px; height: 3px; margin: 0; }
.sw-title .dark { color: #23305e; }
.doc { margin-left: auto; margin-right: 137px; color: #20222a; }
.search { display: flex; align-items: center; gap: 2px; width: 129px; height: 12px; padding: 0 2px; background: #fff; border: 1px solid #777b8a; border-radius: 2px; }
.search svg { width: 9px; height: 9px; }
.search .car { width: 4px; height: 3px; }
.search input { flex: 1; min-width: 0; border: 0; padding: 0; height: 9px; background: none; outline: 0; }
.search input::placeholder { color: #666a74; opacity: 1; }
.sw-win { display: flex; align-items: center; gap: 3px; margin: 0 2px 0 4px; }
.sw-win svg { width: 9px; height: 9px; }
.sw-win .car { width: 4px; height: 3px; margin-right: 5px; }

/* command manager */
.cmd { position: relative; display: flex; height: 40px; margin-left: -1px; background: linear-gradient(#fafbfd, #eceef5 45%, #d9dce8); border-bottom: 1px solid #6f7285; color: #73757d; }
.cmd > button { display: flex; flex-direction: column; align-items: center; justify-content: flex-start; padding-top: 6px; text-align: center; }
.cmd > button > svg { width: 10px; height: 10px; }
.cmd svg { color: #a5a8b1; }
.cmd > .near { padding-top: 2px; }
.cmd > button > .car { width: 4px; height: 3px; margin: auto 0 4px; }
.stack { display: flex; flex-direction: column; }
.stack button { display: flex; align-items: center; gap: 4px; height: 13px; }
.stack svg { width: 9px; height: 9px; }
.sep { border-left: 1px solid #d2d4de; }
.mark { position: absolute; right: 0; top: 2px; width: 32px; height: 36px; opacity: .45; }
.cmd > svg.mark { color: #c3cade; }
.w22 { width: 22px; } .w24 { width: 24px; } .w26 { width: 26px; } .w28 { width: 28px; } .w34 { width: 34px; } .w50 { width: 50px; }
.w84 { width: 84px; } .w64 { width: 64px; } .w63 { width: 63px; } .w52 { width: 52px; }
.cmd-tabs { display: flex; height: 11px; margin-left: -1px; font: 7px/9px "Liberation Sans", sans-serif; color: #555865; }
.cmd-tabs button { padding: 0 3px 0 4px; background: #b7bacb; border: solid #6f7285; border-width: 0 1px 1px 0; }
.cmd-tabs .on { font-weight: bold; color: #33353e; background: #f3f4f8; }
.view-win { display: flex; gap: 3px; margin: 3px 8px 0 auto; height: 10px; }
.view-win svg { width: 10px; height: 9px; }

/* property manager */
.model { flex: 1; min-height: 0; display: flex; }
.panel { width: 112px; background: #e0e3ec; color: #15171c; margin-left: -1px; border-right: 1px solid #70748a; overflow: hidden; }
.ptabs { display: flex; align-items: flex-end; height: 19px; background: #c9cfe4; }
.ptabs button { width: 15px; height: 12px; border: 1px solid #8d92ad; border-width: 1px 1px 0 0; border-radius: 3px 3px 0 0; background: #c0c4da; }
.ptabs .on { height: 15px; background: #e6e8f0; }
.ptabs svg { width: 12px; height: 10px; margin: auto; }
.phead { display: flex; align-items: center; height: 12px; padding: 0 5px 0 1px; color: #fff; background: linear-gradient(#a5a7b4, #7f8294); border: 1px solid #62657a; }
.phead svg { width: 10px; height: 10px; }
.phead h3 { flex: 1; font-weight: bold; font-size: 7px; }
.pok { display: flex; gap: 6px; padding: 4px 2px 7px; }
.pok svg { width: 9px; height: 9px; }
.ok { color: #27a52f; } .no { color: #cf2020; }
.box { position: relative; min-width: 0; margin: 0 2px 3px; padding: 0; border: 1px solid #b8bdcb; background: #eef0f5; }
.box legend { float: left; width: 100%; height: 11px; padding: 1px 3px; font-weight: bold; color: #454b60; background: linear-gradient(#dde0e9, #c3c8d6); }
.chev { position: absolute; right: 3px; top: 2px; width: 6px; height: 6px; }
.radios { clear: both; padding: 0 0 3px 23px; }
.radios label { display: flex; align-items: center; gap: 1px; height: 13px; }
.radios input, .inv input { appearance: none; width: 7px; height: 7px; margin: 0; border: 1px solid #8e929e; border-radius: 50%; background: #f3f3f4; }
.radios input:checked { background: radial-gradient(circle, #235a9a 35%, #e5ebf2 45%); }
.inv input { border-radius: 0; }
.sel { clear: both; display: flex; padding: 1px 4px 3px 3px; height: 23px; }
.sel svg { width: 11px; height: 11px; margin-right: 4px; }
.sel.tall { height: 58px; }
.sel i { width: 6px; margin-right: 1px; }
.pink { background: #f77fbe; } .blue { background: #55a5f2; }
.sel select { flex: 1; min-width: 0; height: 100%; padding: 0; border: 1px solid #8f95a3; border-radius: 0; background: #fff; overflow: hidden; outline: 0; scrollbar-width: none; }
.sel option { padding: 0 2px 1px; min-height: 8px; color: #333; }
.sel .active { border-color: #55a5f2; background: #d0e4f7; }
.active option:checked { color: #fff; background: #3399ff linear-gradient(#3399ff, #3399ff); }
.inv { display: flex; align-items: center; gap: 1px; height: 13px; padding-left: 18px; }
.ang { display: flex; align-items: center; height: 17px; padding: 0 5px 0 3px; }
.ang svg { width: 11px; height: 10px; }
.ang input { width: 75px; height: 11px; margin-left: 4px; padding: 0 2px; border: 1px solid #b4b8c4; background: #fff; }
.spin { display: flex; flex-direction: column; gap: 2px; margin-left: 2px; }
.ang .car { width: 4px; height: 3px; }
.pscroll { position: relative; display: flex; flex-direction: column; width: 10px; background: #f0f1f3; }
.pscroll span { display: grid; place-items: center; height: 9px; }
.pscroll i { height: 227px; background: linear-gradient(90deg, #f2f2f4, #d2d4da); border: 1px solid #a9acb8; border-radius: 1px; }
.pscroll b { position: absolute; left: -1px; top: 183px; width: 6px; height: 16px; border: 1px solid #7e84a4; border-radius: 2px; background: radial-gradient(#3f4a86 1px, #dfe2ee 1px) center / 4px 5px; }

/* model view */
.view { position: relative; flex: 1; min-width: 0; overflow: hidden; background: #c5c8d4; }
.scene { position: absolute; inset: 0; width: 100%; height: 100%; pointer-events: none; }
.tree { position: absolute; top: 3px; left: 1px; margin: 0; padding: 0; list-style: none; color: #16181d; width: 100px; font: 7px/9px Lato, sans-serif; }
.tree li { position: relative; display: flex; align-items: center; height: 10px; padding-left: 19px; gap: 1px; white-space: nowrap; }
.tree li svg { width: 10px; height: 10px; }
.tree li:not(.root)::before { content: ""; position: absolute; left: 13px; top: 0; width: 6px; height: 10px; background: linear-gradient(#7d808b, #7d808b) 0 0 / 1px 10px no-repeat, linear-gradient(#7d808b, #7d808b) 0 5px / 6px 1px no-repeat; }
.tree .exp::after { content: ""; position: absolute; left: 11px; top: 3px; width: 5px; height: 5px; border: 1px solid #6c6f78; background: linear-gradient(#444, #444) center / 3px 1px no-repeat, linear-gradient(#444, #444) center / 1px 3px no-repeat, #d9dbe2; }
.tree .root { padding-left: 0; gap: 2px; }
.tree .root .bx { width: 6px; height: 6px; }
.tree .hot { color: #3fe0ee; }
.hud { position: absolute; top: 4px; left: 256px; display: flex; align-items: center; gap: 3px; color: #4a4e70; }
.hud span { display: flex; align-items: center; gap: 1px; }
.hud svg { width: 10px; height: 10px; }
.hud .car { width: 4px; height: 3px; }

/* status bar */
.status { display: flex; align-items: center; height: 14px; background: #f1eeee; color: #2b2d33; }
.cell { display: flex; align-items: center; gap: 2px; width: 86px; height: 13px; padding-left: 3px; border-right: 1px solid #dcdcdf; }
.cell svg { width: 8px; height: 8px; }
.cell + .cell { padding-left: 4px; }
.zoom { display: flex; align-items: center; height: 13px; margin-left: auto; padding: 0 3px 0 11px; border-left: 1px solid #dcdcdf; font: 7px/9px Lato, sans-serif; }
.zoom button { width: 8px; height: 8px; border: 1px solid #70747c; border-radius: 50%; line-height: 6px; }
.zoom button:first-of-type { margin-left: 4px; }
.zoom input { appearance: none; width: 47px; height: 9px; margin: 0 7px 0 6px; background: linear-gradient(#a9adb5, #a9adb5) center / 100% 1px no-repeat; }
.zoom input::-webkit-slider-thumb { appearance: none; width: 5px; height: 8px; border: 1px solid #70747c; border-radius: 1px 1px 3px 3px; background: #f6f6f7; }

/* taskbar */
.taskbar { display: flex; align-items: stretch; height: 22px; color: #fff; background:
  radial-gradient(ellipse 90px 14px at 44% 90%, #4a241f, transparent),
  radial-gradient(ellipse 110px 10px at 70% 40%, #5a3029, transparent),
  linear-gradient(#17141a, #0c0b10); border-top: 1px solid #4c5159; }
.orb { width: 33px; }
.orb svg { width: 20px; height: 20px; margin-left: 5px; }
.app { width: 34px; margin-right: 1px; display: grid; place-items: center; }
.app svg { width: 18px; height: 18px; }
.run { width: 32px; border: 1px solid #6e6f76; border-radius: 2px; background: linear-gradient(#55565c, #26262c); }
.double { box-shadow: 2px 0 0 -1px #6e6f76; margin-right: 3px; }
.light { background: linear-gradient(#b5b3b6, #77747a); border-color: #c9c9cc; margin-left: 2px; }
.sw { font: bold 7px "Liberation Sans", sans-serif; fill: #fff; }
.tray { display: flex; align-items: center; gap: 4px; margin-left: auto; }
.tray svg { width: 10px; height: 10px; }
.tray .car { width: 5px; height: 4px; margin: 0 3px; }
.lang { margin-right: 1px; font: 7px/9px Lato, sans-serif; }
time { font: 7px/9px Lato, sans-serif; text-align: center; margin: 0 3px; }
.desk { align-self: stretch; width: 8px; border: 1px solid #555a61; background: #1c1d22; }
```
